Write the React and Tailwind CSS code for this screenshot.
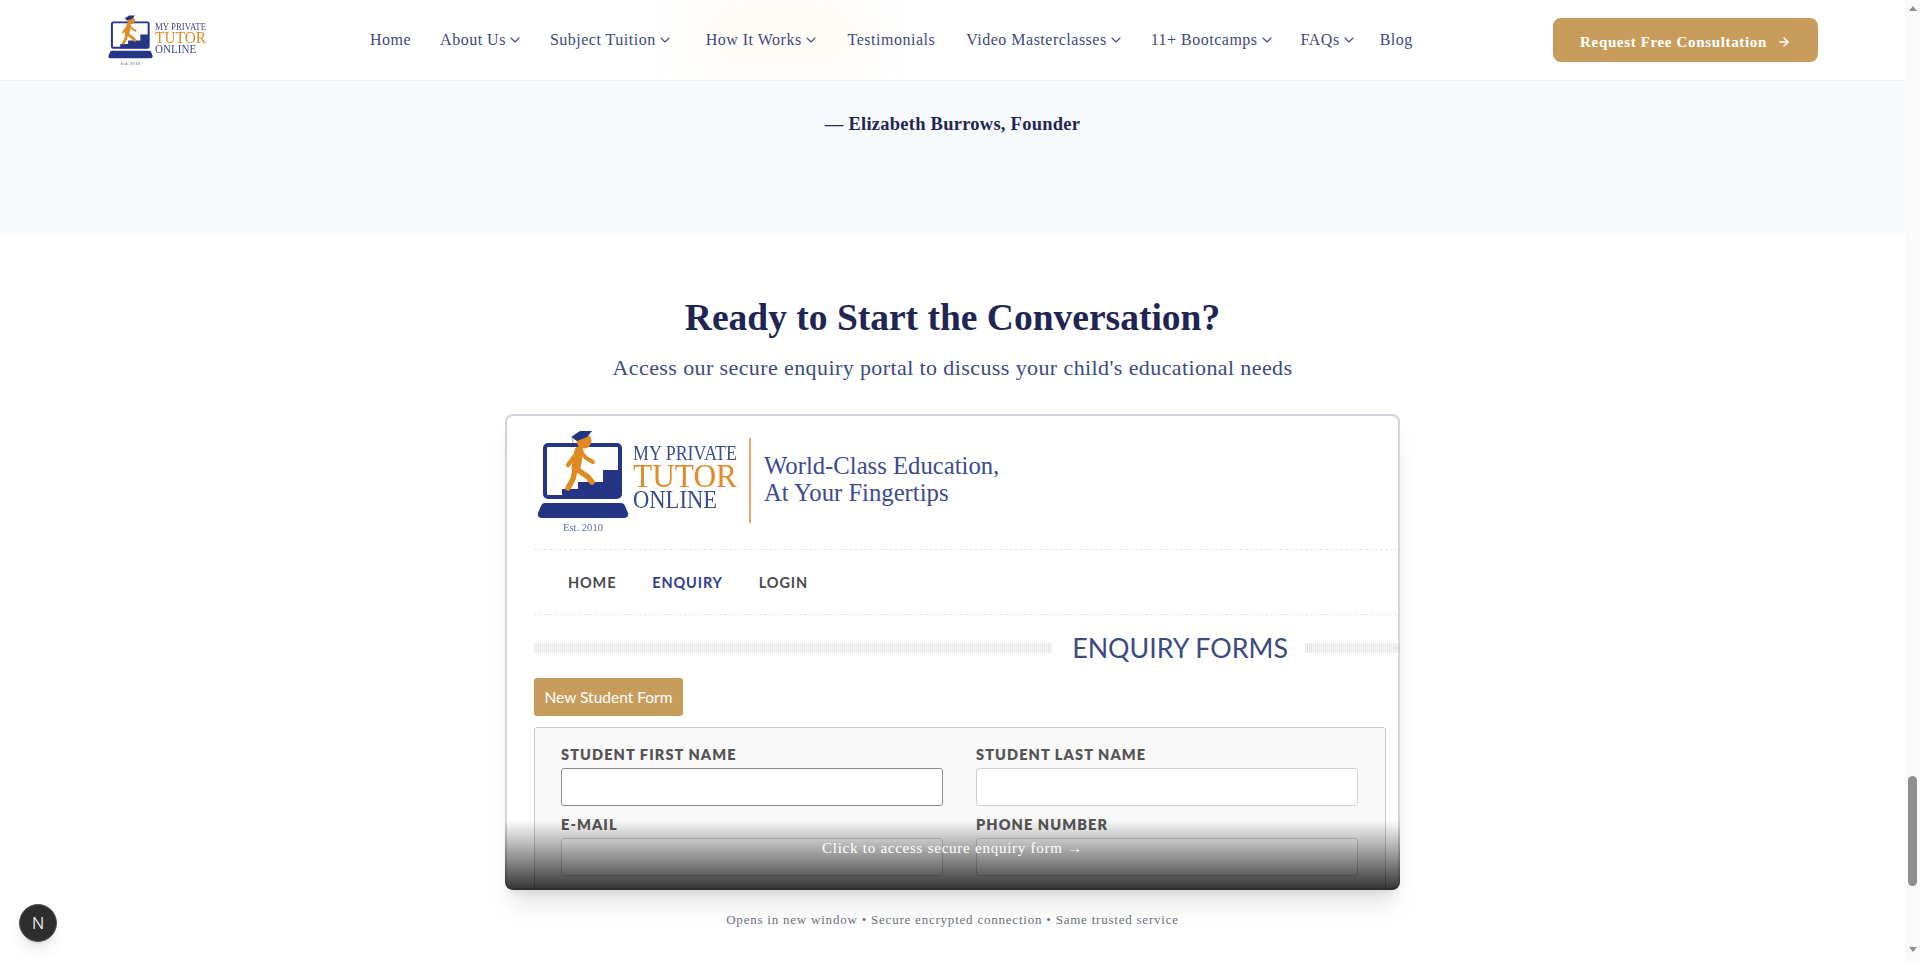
import React from 'react'
import { ChevronDown, ArrowRight } from 'lucide-react'

const navItems = [
    { label: 'Home', offset: 'mr-[3px]' },
    { label: 'About Us', menu: true },
    { label: 'Subject Tuition', menu: true, offset: '-ml-[1px]' },
    { label: 'How It Works', menu: true, offset: 'ml-[5px]' },
    { label: 'Testimonials', offset: 'ml-[1px] mr-[3px]' },
    { label: 'Video Masterclasses', menu: true, offset: 'ml-[2px]' },
    { label: '11+ Bootcamps', menu: true, offset: '-ml-[1px]' },
    { label: 'FAQs', menu: true, offset: '-ml-[2px]' },
    { label: 'Blog', offset: '-ml-[5px]' },
]

const Logo = ({ className }) => (
    <svg viewBox="0 0 200 104" className={`overflow-visible ${className}`}>
        {/* screen */}
        <rect x="8" y="15" width="75" height="52" rx="3" fill="#fff" stroke="#233584" strokeWidth="4" />
        <path d="M25 68 V59 H41 V52 H66 V40 H83 V68 Z" fill="#233584" />
        {/* base */}
        <path d="M8 73 H84 Q87 73 88 76 L91 83 Q92 88 87 88 H5 Q0 88 1 83 L4 76 Q5 73 8 73 Z" fill="#233584" />
        {/* student */}
        <circle cx="47" cy="11" r="7.5" fill="#e08a20" />
        <path d="M34 7 L43 1 L55 1 L50 7 L40 11 Z" fill="#233584" />
        <path d="M35 7 L36 13" stroke="#9aa3cc" strokeWidth="1" fill="none" />
        <g stroke="#e08a20" strokeLinecap="round" strokeLinejoin="round" fill="none">
            <path d="M42 21 L39 38" strokeWidth="9" />
            <path d="M40 23 L31 35" strokeWidth="4.5" />
            <path d="M45 23 L49 28 L56 32" strokeWidth="4" />
            <path d="M38 40 L36 49 L31 58" strokeWidth="5.5" />
            <path d="M41 40 L51 47 L55 52" strokeWidth="5.5" />
        </g>
        <text x="96" y="30" textLength="104" lengthAdjust="spacingAndGlyphs" fontFamily="'Liberation Serif', serif" fontSize="20" fill="#3c4a8f">MY PRIVATE</text>
        <text x="96" y="57" textLength="104" lengthAdjust="spacingAndGlyphs" fontFamily="'Liberation Serif', serif" fontSize="33" fill="#e08a2a">TUTOR</text>
        <text x="96" y="78" textLength="84" lengthAdjust="spacingAndGlyphs" fontFamily="'Liberation Serif', serif" fontSize="26" fill="#3c4a8f">ONLINE</text>
        <text x="26" y="101" textLength="40" lengthAdjust="spacingAndGlyphs" fontFamily="'Liberation Serif', serif" fontSize="10" fill="#5c6aa8">Est. 2010</text>
    </svg>
)

const Field = ({ label, focused }) => (
    <div>
        <div className="h-5 mb-[3px] text-[14.5px] leading-5 font-extrabold tracking-[1.1px] text-[#555] font-['Lato',sans-serif]">{label}</div>
        <div className={`h-[38px] mb-[9px] rounded-[3px] bg-white border ${focused ? 'border-[#8a8a8a]' : 'border-[#cfcfcf]'}`} />
    </div>
)

const App = () => {
    return (
        <div className="flex h-[961px] overflow-hidden bg-white font-['Liberation_Serif',serif]">
            <div className="relative flex-1 min-w-0">
                <header className="relative h-[81px] overflow-hidden flex items-center pl-[108px] pr-[87px] bg-white border-b border-[#eef0f4]">
                    <div className="absolute left-[690px] -top-2 w-[180px] h-[84px] bg-[#fffcf6] blur-xl" />
                    <Logo className="relative w-[98px] h-[51px] blur-[0.3px]" />
                    <nav className="relative flex items-center gap-[26px] ml-[164px] text-[16px] tracking-[0.5px] text-[#3d4980]">
                        {navItems.map((item) => (
                            <a key={item.label} className={`flex items-center whitespace-nowrap ${item.offset || ''}`}>
                                {item.label}
                                {item.menu && <ChevronDown className="ml-[1px] mr-[2px] w-4 h-4" strokeWidth={1.6} />}
                            </a>
                        ))}
                    </nav>
                    <button className="relative ml-auto w-[265px] h-11 pt-[4px] flex items-center justify-center gap-[10px] rounded-lg bg-[#c89d5c] text-white text-[15px] font-bold tracking-[0.65px]">
                        Request Free Consultation
                        <ArrowRight className="w-[14px] h-[14px]" strokeWidth={2.5} />
                    </button>
                </header>

                <section className="h-[153px] pt-[31px] bg-[#f8f9fc] text-center text-[18.5px] leading-6 font-bold tracking-[0.25px] text-[#1f2653]">
                    — Elizabeth Burrows, Founder
                </section>

                <section className="flex flex-col items-center pt-16">
                    <h2 className="text-[37.5px] leading-10 font-bold text-[#1f2653]">Ready to Start the Conversation?</h2>
                    <p className="mt-4 text-[22px] leading-7 tracking-[0.4px] text-[#3d4980]">
                        Access our secure enquiry portal to discuss your child's educational needs
                    </p>

                    <div className="relative mt-8 w-[895px] h-[476px] rounded-lg shadow-xl">
                        <div className="h-full overflow-hidden rounded-lg border-2 border-[#d1d5db] bg-white pl-[27px] pr-0 font-['Lato',sans-serif]">
                            <div className="flex h-[134px] pl-[3px] pt-[14px] border-b border-dashed border-[#e5e5e5]">
                                <Logo className="w-[200px] h-[104px] blur-[0.3px]" />
                                <div className="w-[2px] h-[85px] mt-[8px] ml-[12px] bg-[#eba868]" />
                                <div className="ml-[13px] mt-[22px] text-[24.7px] leading-[27px] font-['Liberation_Serif',serif] text-[#3c4a8f]">
                                    World-Class Education,<br />At Your Fingertips
                                </div>
                            </div>
                            <div className="flex items-center gap-9 h-[65px] pt-[2px] pl-[34px] border-b border-dashed border-[#e5e5e5] text-[14.5px] font-bold tracking-[0.85px] text-[#4a4a4a]">
                                <span>HOME</span>
                                <span className="text-[#2f3c95]">ENQUIRY</span>
                                <span>LOGIN</span>
                            </div>
                            <div className="flex items-center mt-[14px]">
                                <div className="flex-1 h-[10px] bg-[repeating-linear-gradient(90deg,#e6e6e6_0,#e6e6e6_1px,#f6f6f6_1px,#f6f6f6_2px)]" />
                                <div className="ml-[20px] mr-[17px] text-[26.8px] leading-[38px] text-[#3c4a82]">ENQUIRY FORMS</div>
                                <div className="w-[93px] h-[10px] bg-[repeating-linear-gradient(90deg,#e6e6e6_0,#e6e6e6_1px,#f6f6f6_1px,#f6f6f6_2px)]" />
                            </div>
                            <button className="block mt-[11px] pt-[1px] w-[149px] h-[38px] rounded-[3px] bg-[#c89d5c] text-white text-[15.5px]">New Student Form</button>
                            <div className="mt-[11px] mr-[12px] h-[200px] pt-[17px] pl-[26px] pr-[27px] rounded-[3px] border border-[#c9c9c9] bg-[#f9f9f9]">
                                <div className="grid grid-cols-2 gap-x-[33px]">
                                    <Field label="STUDENT FIRST NAME" focused />
                                    <Field label="STUDENT LAST NAME" />
                                    <Field label="E-MAIL" />
                                    <Field label="PHONE NUMBER" />
                                </div>
                            </div>
                        </div>
                        <div className="absolute inset-x-0 bottom-0 h-[70px] pt-[18px] rounded-b-lg bg-linear-to-b from-transparent to-black/80 text-center text-[15px] leading-5 tracking-[0.75px] text-white">
                            Click to access secure enquiry form →
                        </div>
                    </div>

                    <p className="mt-[22px] text-[13px] leading-4 tracking-[0.78px] text-[#6b7088]">
                        Opens in new window • Secure encrypted connection • Same trusted service
                    </p>
                </section>

                <div className="absolute left-[19px] top-[904px] w-[38px] h-[38px] rounded-full flex items-center justify-center bg-[#2e2e2e] border border-[#555] shadow-lg text-white text-[16px] font-['Inter',sans-serif] font-light">
                    N
                </div>
            </div>

            {/* browser scrollbar */}
            <aside className="w-[15px] shrink-0 flex flex-col items-center bg-[#fafafa]">
                <div className="mt-[6px] w-0 h-0 border-x-[4.5px] border-x-transparent border-b-[5px] border-b-[#8f8f8f]" />
                <div className="mt-[765px] w-[9px] h-[110px] rounded-full bg-[#8f8f8f]" />
                <div className="mt-[61px] w-0 h-0 border-x-[4.5px] border-x-transparent border-t-[5px] border-t-[#8f8f8f]" />
            </aside>
        </div>
    )
}

export default App
